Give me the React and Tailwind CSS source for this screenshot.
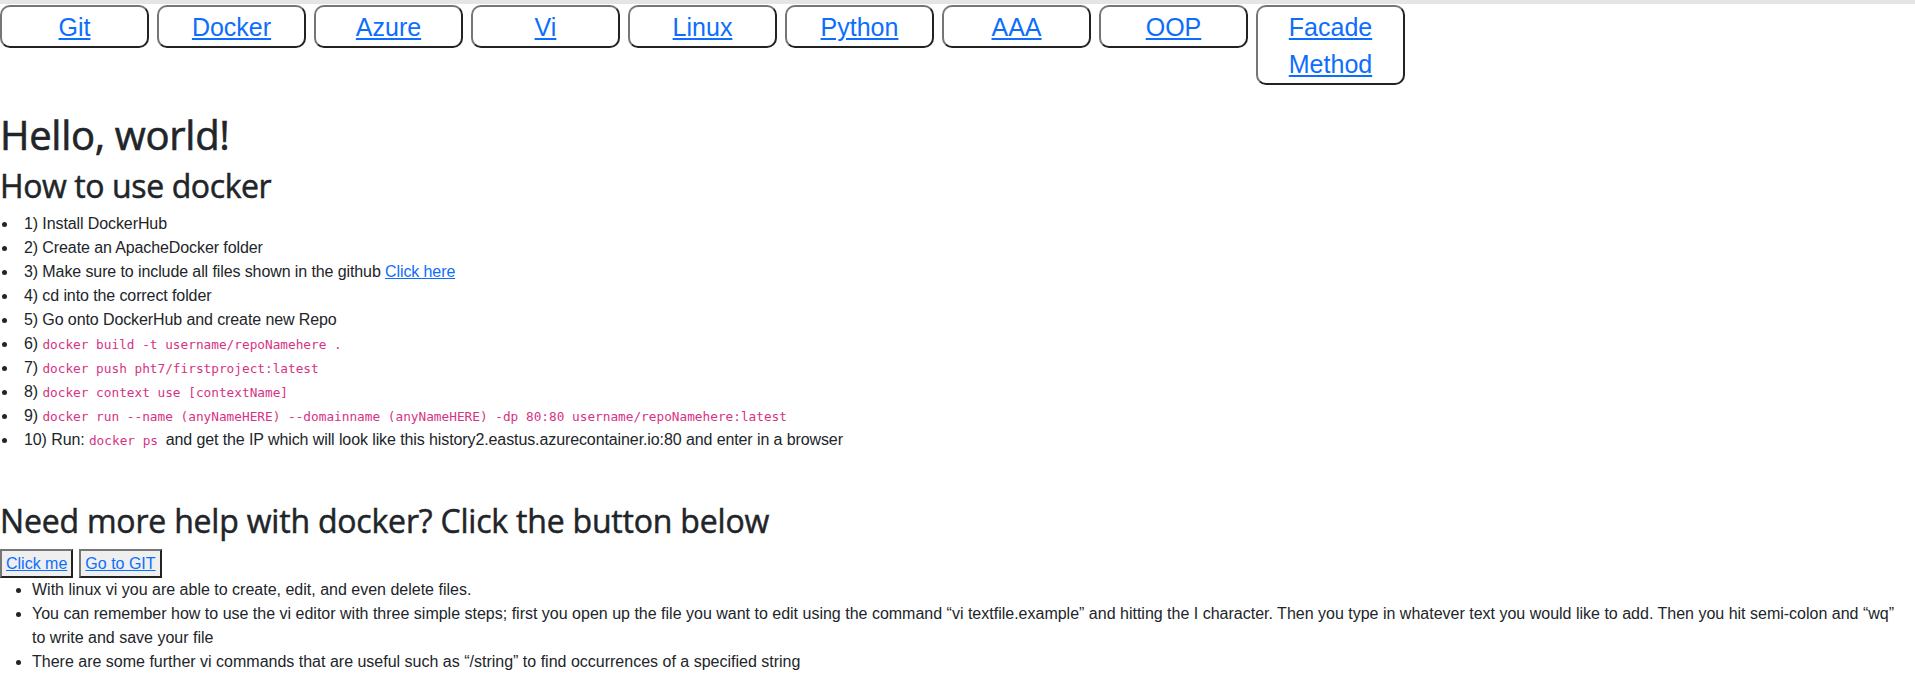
import React from "react";

const navItems = ["Git", "Docker", "Azure", "Vi", "Linux", "Python", "AAA", "OOP", "Facade Method"];

function Code({ children }) {
  return (
    <code className="font-['DejaVu_Sans_Mono',monospace] text-[12.75px] leading-none tracking-normal text-[#d63384]">
      {children}
    </code>
  );
}

function NavButton({ label }) {
  return (
    <button className="w-[149px] shrink-0 rounded-[10px] border-2 border-[#767676] border-r-[#222] border-b-[#222] bg-white px-[6px] pt-[2px] pb-0 text-center text-[25px] leading-[37px]">
      <a href="#" className="text-[#0d6efd] underline">{label}</a>
    </button>
  );
}

function GrayButton({ children }) {
  return (
    <button className="border-2 border-[#767676] border-r-[#222] border-b-[#222] bg-[#efefef] px-[4px] py-[1px] text-[16px] leading-[23px]">
      <a href="#" className="text-[#0d6efd] underline">{children}</a>
    </button>
  );
}

export default function App() {
  return (
    <div className="min-h-screen bg-white font-['Liberation_Sans',Arial,sans-serif] text-[#212529]">
      <div className="h-1 bg-[#e5e5e5]" />
      <nav className="flex flex-wrap items-start gap-x-[8px] pt-[1px]">
        {navItems.map((item) => (
          <NavButton key={item} label={item} />
        ))}
      </nav>

      <h1 className="mt-[26px] mb-[8px] font-['Open_Sans',sans-serif] text-[40px] font-medium leading-[48px] tracking-[-0.3px] [-webkit-text-stroke:0.6px_currentColor]">
        Hello, world!
      </h1>
      <h2 className="mb-[7px] font-['Open_Sans',sans-serif] text-[32px] font-medium leading-[38px] tracking-[-0.4px] [-webkit-text-stroke:0.5px_currentColor]">
        How to use docker
      </h2>

      <ul className="list-disc pl-[18px] text-[16px] leading-[24px] tracking-[-0.1px]">
        <li><span className="pl-[6px]">1) Install DockerHub</span></li>
        <li><span className="pl-[6px]">2) Create an ApacheDocker folder</span></li>
        <li>
          <span className="pl-[6px]">
            3) Make sure to include all files shown in the github{" "}
            <a href="#" className="text-[#0d6efd] underline">Click here</a>
          </span>
        </li>
        <li><span className="pl-[6px]">4) cd into the correct folder</span></li>
        <li><span className="pl-[6px]">5) Go onto DockerHub and create new Repo</span></li>
        <li><span className="pl-[6px]">6) <Code>docker build -t username/repoNamehere .</Code></span></li>
        <li><span className="pl-[6px]">7) <Code>docker push pht7/firstproject:latest</Code></span></li>
        <li><span className="pl-[6px]">8) <Code>docker context use [contextName]</Code></span></li>
        <li>
          <span className="pl-[6px]">
            9) <Code>docker run --name (anyNameHERE) --domainname (anyNameHERE) -dp 80:80 username/repoNamehere:latest</Code>
          </span>
        </li>
        <li>
          <span className="pl-[6px]">
            10) Run: <Code>docker ps </Code>and get the IP which will look like this
            history2.eastus.azurecontainer.io:80 and enter in a browser
          </span>
        </li>
      </ul>

      <h2 className="mt-[50px] mb-[9px] font-['Open_Sans',sans-serif] text-[32px] font-medium leading-[38px] tracking-[-0.2px] [-webkit-text-stroke:0.5px_currentColor]">
        Need more help with docker? Click the button below
      </h2>
      <div className="flex gap-[6px]">
        <GrayButton>Click me</GrayButton>
        <GrayButton>Go to GIT</GrayButton>
      </div>

      <ul className="list-disc pl-[32px] pr-[12px] text-[16px] leading-[24px]">
        <li>With linux vi you are able to create, edit, and even delete files.</li>
        <li>
          You can remember how to use the vi editor with three simple steps; first you open up the file you want to edit
          using the command “vi textfile.example” and hitting the I character. Then you type in whatever text you would
          like to add. Then you hit semi-colon and “wq” to write and save your file
        </li>
        <li>There are some further vi commands that are useful such as “/string” to find occurrences of a specified string</li>
      </ul>
    </div>
  );
}
